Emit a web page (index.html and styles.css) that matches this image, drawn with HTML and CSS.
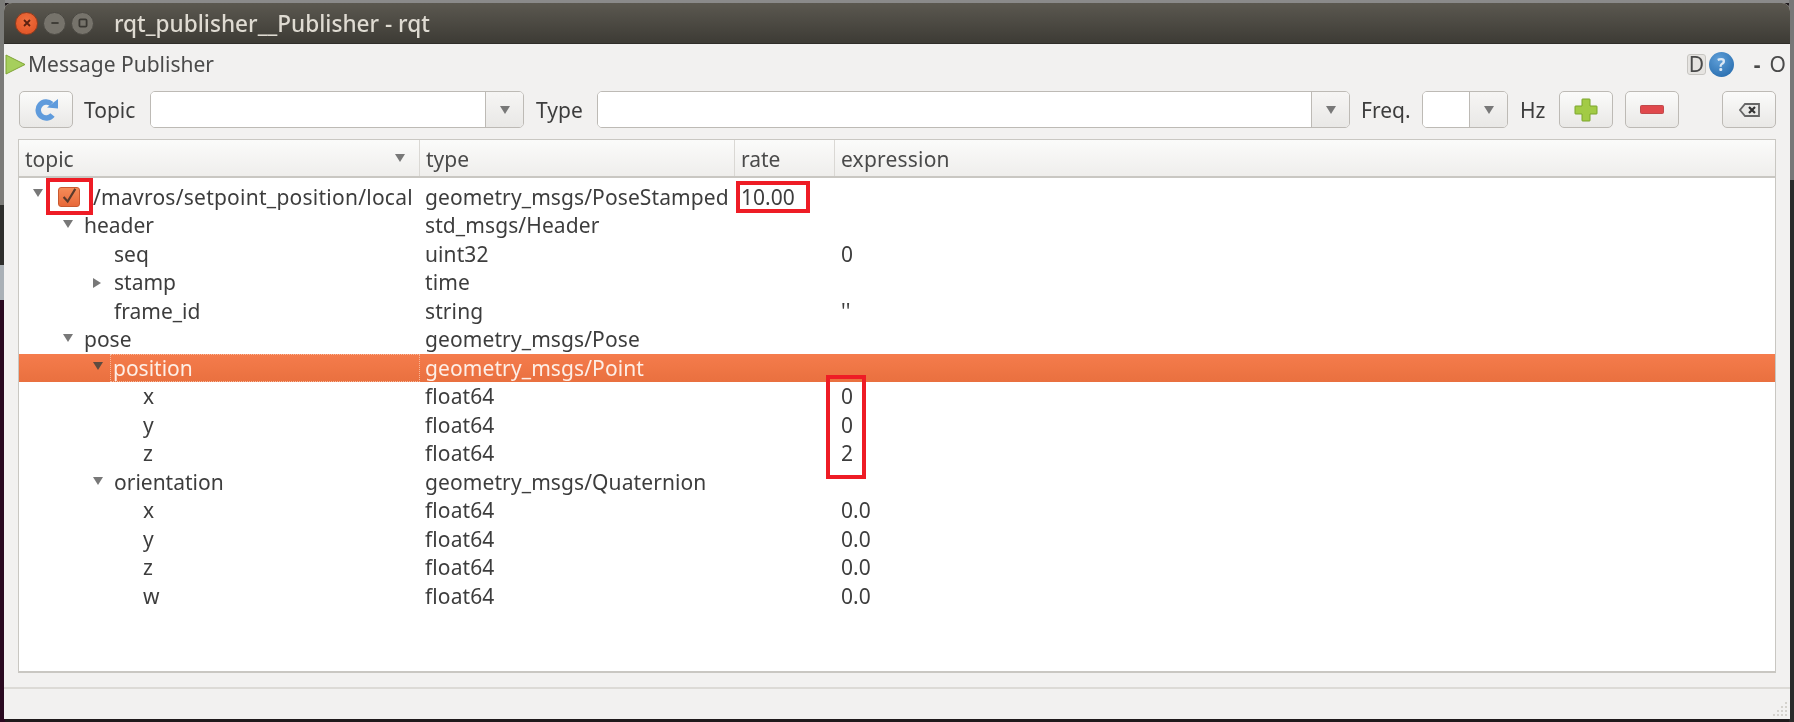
FILE: index.html
```html
<!DOCTYPE html>
<html lang="en">
<head>
<meta charset="utf-8">
<title>rqt_publisher__Publisher - rqt</title>
<link rel="stylesheet" href="styles.css">
</head>
<body>
<div class="window">
  <header class="titlebar soft">
    <span class="wbtn close"><svg viewBox="0 0 10 10"><path d="M2.500 2.500l5 5M7.500 2.500l-5 5"/></svg></span>
    <span class="wbtn"><svg viewBox="0 0 10 10"><path d="M2 5h6"/></svg></span>
    <span class="wbtn"><svg viewBox="0 0 10 10"><rect x="2" y="2" width="6" height="6" rx="1"/></svg></span>
    <span class="wtitle">rqt_publisher__Publisher - rqt</span>
  </header>

  <div class="pluginbar soft">
    <svg class="play" viewBox="0 0 21 21"><path d="M1 1L20 10.500L1 20Z" fill="#a6cf5c" stroke="#7fa336"/></svg>
    <span class="plugintitle">Message Publisher</span>
    <span class="dbox">D</span>
    <span class="help">?</span>
    <span class="dash">-</span>
    <span class="oh">O</span>
  </div>

  <div class="toolbar soft">
    <button class="btn">
      <svg viewBox="0 0 25 23" class="ico ico-refresh"><path d="M17.500 6A8 8 0 1 0 18.500 17" fill="none" stroke="#5f9bdc" stroke-width="5.500"/><path d="M13 9.500L24 10.500V1Z" fill="#5f9bdc"/></svg>
    </button>
    <label class="lab lab-topic">Topic</label>
    <div class="combo combo-topic"><span class="field"></span><span class="drop"><i class="tri"></i></span></div>
    <label class="lab lab-type">Type</label>
    <div class="combo combo-type"><span class="field"></span><span class="drop"><i class="tri"></i></span></div>
    <label class="lab lab-freq">Freq.</label>
    <div class="combo combo-freq"><span class="field"></span><span class="drop"><i class="tri"></i></span></div>
    <label class="lab lab-hz">Hz</label>
    <button class="btn btn-add">
      <svg viewBox="0 0 24 24" class="ico ico-plus"><path d="M8.500 1H15.500Q16 1 16 1.500V8H22.500Q23 8 23 8.500V15.500Q23 16 22.500 16H16V22.500Q16 23 15.500 23H8.500Q8 23 8 22.500V16H1.500Q1 16 1 15.500V8.500Q1 8 1.500 8H8V1.500Q8 1 8.500 1Z" fill="#a2cb45" stroke="#7aa52c"/></svg>
    </button>
    <button class="btn btn-remove">
      <svg viewBox="0 0 24 9" class="ico ico-minus"><rect x="0.500" y="0.500" width="23" height="8" rx="1" fill="#e0484c" stroke="#c04a4c"/></svg>
    </button>
    <button class="btn btn-clear">
      <svg viewBox="0 0 21 14" class="ico ico-clear"><path d="M6 1H20V13H6L1 7Z" fill="#e8e8e6" stroke="#666" stroke-width="1.800"/><path d="M10 4l6 6M16 4l-6 6" stroke="#333" stroke-width="2.200"/></svg>
    </button>
  </div>

  <div class="tree soft">
    <div class="thead">
      <div class="hc c1">topic<i class="tri sort"></i></div>
      <div class="hc c2">type</div>
      <div class="hc c3">rate</div>
      <div class="hc c4">expression</div>
    </div>
    <div class="tbody">
      <div class="row"><div class="cell c1 d0"><i class="tri arrow"></i><span class="check"><svg viewBox="0 0 22 20"><path d="M5 10l4.500 5L18 1" fill="none" stroke="#5a3a2c" stroke-width="2.400"/></svg></span><span class="tx-check">/mavros/setpoint_position/local</span></div><div class="cell c2">geometry_msgs/PoseStamped</div><div class="cell c3">10.00</div><div class="cell c4"></div></div>
      <div class="row"><div class="cell c1 d1"><i class="tri arrow"></i>header</div><div class="cell c2">std_msgs/Header</div><div class="cell c3"></div><div class="cell c4"></div></div>
      <div class="row"><div class="cell c1 d2">seq</div><div class="cell c2">uint32</div><div class="cell c3"></div><div class="cell c4">0</div></div>
      <div class="row"><div class="cell c1 d2"><i class="tri arrow closed"></i>stamp</div><div class="cell c2">time</div><div class="cell c3"></div><div class="cell c4"></div></div>
      <div class="row"><div class="cell c1 d2">frame_id</div><div class="cell c2">string</div><div class="cell c3"></div><div class="cell c4">''</div></div>
      <div class="row"><div class="cell c1 d1"><i class="tri arrow"></i>pose</div><div class="cell c2">geometry_msgs/Pose</div><div class="cell c3"></div><div class="cell c4"></div></div>
      <div class="row selected"><div class="cell c1 d2"><i class="tri arrow"></i><span class="focus">position</span></div><div class="cell c2">geometry_msgs/Point</div><div class="cell c3"></div><div class="cell c4"></div></div>
      <div class="row"><div class="cell c1 d3">x</div><div class="cell c2">float64</div><div class="cell c3"></div><div class="cell c4">0</div></div>
      <div class="row"><div class="cell c1 d3">y</div><div class="cell c2">float64</div><div class="cell c3"></div><div class="cell c4">0</div></div>
      <div class="row"><div class="cell c1 d3">z</div><div class="cell c2">float64</div><div class="cell c3"></div><div class="cell c4">2</div></div>
      <div class="row"><div class="cell c1 d2"><i class="tri arrow"></i>orientation</div><div class="cell c2">geometry_msgs/Quaternion</div><div class="cell c3"></div><div class="cell c4"></div></div>
      <div class="row"><div class="cell c1 d3">x</div><div class="cell c2">float64</div><div class="cell c3"></div><div class="cell c4">0.0</div></div>
      <div class="row"><div class="cell c1 d3">y</div><div class="cell c2">float64</div><div class="cell c3"></div><div class="cell c4">0.0</div></div>
      <div class="row"><div class="cell c1 d3">z</div><div class="cell c2">float64</div><div class="cell c3"></div><div class="cell c4">0.0</div></div>
      <div class="row"><div class="cell c1 d3">w</div><div class="cell c2">float64</div><div class="cell c3"></div><div class="cell c4">0.0</div></div>
    </div>
  </div>

  <div class="status soft"><svg class="grip" viewBox="0 0 16 16"><g fill="#d4d2cd"><rect x="13" y="1" width="2" height="2"/><rect x="9" y="5" width="2" height="2"/><rect x="13" y="5" width="2" height="2"/><rect x="5" y="9" width="2" height="2"/><rect x="9" y="9" width="2" height="2"/><rect x="13" y="9" width="2" height="2"/><rect x="1" y="13" width="2" height="2"/><rect x="5" y="13" width="2" height="2"/><rect x="9" y="13" width="2" height="2"/><rect x="13" y="13" width="2" height="2"/></g></svg></div>

  <span class="mark mark-check"></span>
  <span class="mark mark-rate"></span>
  <span class="mark mark-values"></span>
</div>
</body>
</html>
```

FILE: styles.css
```css
* { box-sizing: border-box; }
html, body { margin: 0; height: 100%; }
body {
  width: 1794px;
  height: 722px;
  overflow: hidden;
  background:
    linear-gradient(#7b7b78 0 205px, #2e2e2c 205px 265px, #a9b0b6 265px 300px, #2a0a20 300px) left top / 5px 100% no-repeat,
    linear-gradient(#777 0 180px, #2a2a2a 180px) right top / 5px 100% no-repeat,
    linear-gradient(#8a8a8a 0 3px, #1f1a1c 3px);
  padding: 3px 4px;
  font-family: "Noto Sans", "Open Sans", sans-serif;
  font-size: 21px;
  color: #3d3d3d;
}
.window {
  position: relative;
  width: 1786px;
  height: 716px;
  background: #f2f1f0;
  display: flex;
  flex-direction: column;
  border-radius: 8px 8px 0 0;
  overflow: hidden;
}
.soft { filter: blur(0.4px); }
.titlebar {
  height: 41px;
  flex: none;
  display: flex;
  align-items: center;
  padding-left: 11px;
  gap: 5px;
  background: linear-gradient(#5b5850, #3d3b35);
  border-bottom: 1px solid #2f2d29;
}
.wbtn {
  width: 23px;
  height: 23px;
  border-radius: 50%;
  background: #76736b;
  border: 1px solid #4a4842;
  display: flex;
  flex: none;
  align-items: center;
  justify-content: center;
}
.wbtn svg { width: 12px; height: 12px; fill: none; stroke: #3a3833; stroke-width: 1.5; }
.wbtn.close { background: radial-gradient(circle at 50% 35%, #f0703f, #dd4f22); border-color: #8f3c1e; }
.wbtn.close svg { stroke: #5c2110; }
.wtitle { margin-left: 15px; color: #dfdbd2; font-size: 22.600px; font-weight: 500; white-space: nowrap; }

.pluginbar {
  height: 38px;
  flex: none;
  display: flex;
  align-items: center;
  padding: 2px 4px 0 1px;
  color: #4a4a4a;
}
.play { width: 21px; height: 21px; flex: none; }
.plugintitle { margin-left: 2px; }
.dbox {
  margin-left: auto;
  width: 19px;
  height: 21px;
  background: #e6e4e1;
  border: 1px solid #c8c6c2;
  border-radius: 3px;
  display: flex;
  align-items: center;
  justify-content: center;
}
.help {
  width: 25px;
  height: 25px;
  margin-left: 3px;
  border-radius: 50%;
  background: radial-gradient(circle at 40% 30%, #5f9fd8, #1f65a8);
  color: #dde9f5;
  font-weight: 700;
  font-size: 17px;
  display: flex;
  align-items: center;
  justify-content: center;
}
.dash { margin-left: 20px; font-weight: 700; }
.oh { margin-left: 9px; }

.toolbar {
  height: 37px;
  flex: none;
  margin-top: 9px;
  display: flex;
  align-items: center;
  padding-left: 15px;
}
.btn {
  width: 54px;
  height: 37px;
  padding: 0;
  flex: none;
  border: 1px solid #bdbab5;
  border-radius: 5px;
  background: linear-gradient(#fbfbfa, #e9e8e6);
  display: flex;
  align-items: center;
  justify-content: center;
}
.ico { display: block; }
.ico-refresh { width: 25px; height: 23px; }
.ico-plus { width: 24px; height: 24px; }
.ico-minus { width: 24px; height: 9px; }
.ico-clear { width: 21px; height: 14px; }
.lab { flex: none; }
.lab-topic { margin-left: 11px; width: 66px; }
.lab-type { margin-left: 12px; width: 61px; }
.lab-freq { margin-left: 11px; width: 61px; }
.lab-hz { margin-left: 12px; width: 39px; }
.combo {
  height: 37px;
  flex: none;
  display: flex;
  border: 1px solid #bdbab5;
  border-radius: 5px;
  overflow: hidden;
}
.combo-topic { width: 374px; }
.combo-type { width: 753px; }
.combo-freq { width: 86px; }
.field { flex: 1; background: #fff; border-right: 1px solid #bdbab5; }
.drop {
  width: 37px;
  background: linear-gradient(#f6f5f4, #e9e8e6);
  display: flex;
  align-items: center;
  justify-content: center;
}
.tri {
  display: block;
  width: 0;
  height: 0;
  border-left: 5.5px solid transparent;
  border-right: 5.5px solid transparent;
  border-top: 8px solid #787878;
}
.btn-remove { margin-left: 12px; }
.btn-clear { margin-left: 43px; }

.tree {
  width: 1758px;
  height: 534px;
  margin: 11px 0 0 14px;
  flex: none;
  background: #fff;
  border: 1px solid #c9c7c2;
  border-bottom-width: 2px;
  display: flex;
  flex-direction: column;
}
.thead {
  height: 38px;
  flex: none;
  display: flex;
  background: linear-gradient(#fbfbfa, #efeeec);
  border-bottom: 2px solid #c9c7c2;
}
.hc {
  position: relative;
  display: flex;
  align-items: center;
  padding: 2px 0 0 6px;
  border-right: 1px solid #dad8d4;
  color: #4a4a4a;
}
.hc.c4 { border-right: 0; letter-spacing: 0.2px; }
.c1 { width: 401px; flex: none; }
.c2 { width: 315px; flex: none; }
.c3 { width: 100px; flex: none; }
.c4 { flex: 1; }
.sort { position: absolute; right: 14px; top: 14px; }
.tbody { padding-top: 4.500px; }
.row { height: 28.5px; display: flex; align-items: center; }
.cell { white-space: nowrap; display: flex; align-items: center; height: 100%; position: relative; }
.cell.c2 { padding-left: 5px; letter-spacing: 0.1px; }
.cell.c3 { padding-left: 6px; }
.cell.c4 { padding-left: 6px; }
.arrow { position: absolute; top: 9px; border-left-width: 5px; border-right-width: 5px; }
.d0 .arrow { left: 14px; top: 6px; }
.d1 .arrow { left: 44px; }
.d2 .arrow { left: 74px; }
.arrow.closed {
  border-top: 5px solid transparent;
  border-bottom: 5px solid transparent;
  border-left: 8px solid #787878;
  border-right: 0;
  top: 10px;
}
.selected .arrow { top: 8px; }
.d0 { padding-left: 39px; }
.d1 { padding-left: 65px; }
.d2 { padding-left: 95px; }
.d3 { padding-left: 124px; }
.check {
  width: 22px;
  height: 20px;
  flex: none;
  background: linear-gradient(#f58b58, #e8693a);
  border: 1px solid #c9592f;
  border-radius: 3px;
  display: flex;
}
.check svg { width: 100%; height: 100%; overflow: visible; }
.tx-check { margin-left: 13px; letter-spacing: 0.25px; }
.selected { background: linear-gradient(#f57c4c, #e9703f); color: #fdeee6; }
.selected .arrow { border-top-color: #5d4b40; }
.focus {
  position: absolute;
  left: 91px;
  right: 0;
  top: 0;
  bottom: 0;
  padding-left: 2px;
  display: flex;
  align-items: center;
  border: 1px dotted #f7b79a;
}
.status {
  margin-top: 14px;
  flex: 1;
  border-top: 2px solid #dcdad6;
  position: relative;
}
.grip { position: absolute; right: 2px; bottom: 2px; width: 16px; height: 16px; }
.mark { position: absolute; border: 4px solid #ee1c25; pointer-events: none; }
.mark-check { left: 42px; top: 175px; width: 47px; height: 37px; }
.mark-rate { left: 732px; top: 178px; width: 74px; height: 32px; }
.mark-values { left: 822px; top: 372px; width: 40px; height: 104px; }
```
